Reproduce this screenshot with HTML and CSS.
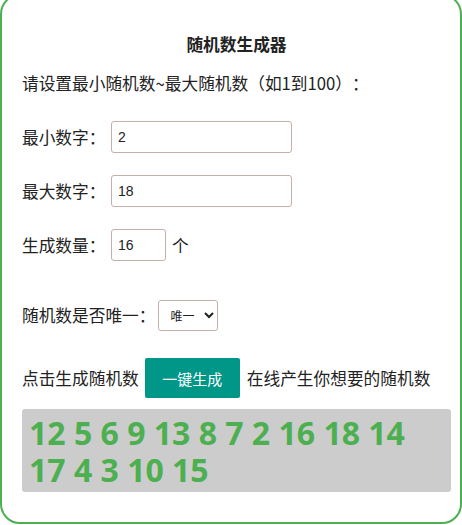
FILE: index.html
```html
<!DOCTYPE html>
<html lang="zh-CN">
<head>
  <meta charset="UTF-8" />
  <meta name="viewport" content="width=device-width, initial-scale=1" />
  <title>随机数生成器</title>
  <link rel="stylesheet" href="styles.css">
</head>
<body>

  <div class="box">
    <h1>随机数生成器</h1>
    <p class="desc">请设置最小随机数~最大随机数（如1到100）：</p>

    <div class="row">
      <label>最小数字：</label>
      <input type="text" class="field" value="2" />
    </div>

    <div class="row">
      <label>最大数字：</label>
      <input type="text" class="field" value="18" />
    </div>

    <div class="row">
      <label>生成数量：</label>
      <input type="text" class="field small" value="16" />
      <span class="unit">个</span>
    </div>

    <div class="row row-select">
      <label>随机数是否唯一：</label>
      <select class="pick">
        <option>唯一</option>
        <option>可重复</option>
      </select>
    </div>

    <div class="row row-btn">
      <span>点击生成随机数</span>
      <button class="go">一键生成</button>
      <span>在线产生你想要的随机数</span>
    </div>

    <div class="result">12 5 6 9 13 8 7 2 16 18 14 17 4 3 10 15</div>
  </div>

</body>
</html>
```

FILE: styles.css
```css
* {
  margin: 0;
  padding: 0;
  box-sizing: border-box;
}

body {
  background: #fff;
  color: #222;
  font-family: "Noto Sans CJK SC", "Microsoft YaHei", sans-serif;
  font-size: 16.7px;
  text-spacing-trim: space-all;
}

.box {
  margin-top: -6px;
  height: 530px;
  border: 2px solid #4caf50;
  border-radius: 20px;
  padding: 0 9px 0 20px;
}

.box h1 {
  margin-top: 36px;
  font-size: 16.7px;
  line-height: 24px;
  font-weight: bold;
  text-align: center;
}

.desc {
  margin-top: 15px;
  line-height: 24px;
}

.row {
  display: flex;
  align-items: center;
  height: 32px;
  margin-top: 22px;
}

.row:first-of-type {
  margin-top: 26px;
}

.row label {
  width: 89px;
}

.field {
  width: 181px;
  height: 32px;
  border: 1px solid #c4b0a8;
  border-radius: 3px;
  padding: 0 6px;
  font-family: "Liberation Sans", Arial, sans-serif;
  font-size: 14px;
  color: #222;
  outline: none;
}

.field.small {
  width: 55px;
}

.unit {
  margin-left: 6px;
}

.row-select {
  margin-top: 39px;
  height: 30px;
}

.row-select label {
  width: auto;
  margin-right: 2px;
}

.pick {
  width: 60px;
  height: 31px;
  border: 1px solid #c4b0a8;
  border-radius: 3px;
  padding: 0 4px 0 8px;
  font-family: "Noto Sans CJK SC", sans-serif;
  font-size: 12px;
  color: #222;
  background: #fff;
}

.row-btn {
  margin-top: 28px;
  height: 40px;
}

.go {
  width: 95px;
  height: 40px;
  margin: 0 7px 0 6px;
  border: none;
  border-radius: 2px;
  background: #009688;
  color: #fff;
  font-family: "Noto Sans CJK SC", sans-serif;
  font-size: 15px;
  cursor: pointer;
}

.result {
  margin-top: 11px;
  width: 429px;
  height: 83px;
  padding: 5px 7px;
  background: #ccc;
  border-radius: 3px;
  color: #4caf50;
  font-family: "Open Sans", sans-serif;
  font-weight: bold;
  font-size: 32px;
  line-height: 37px;
}
```
